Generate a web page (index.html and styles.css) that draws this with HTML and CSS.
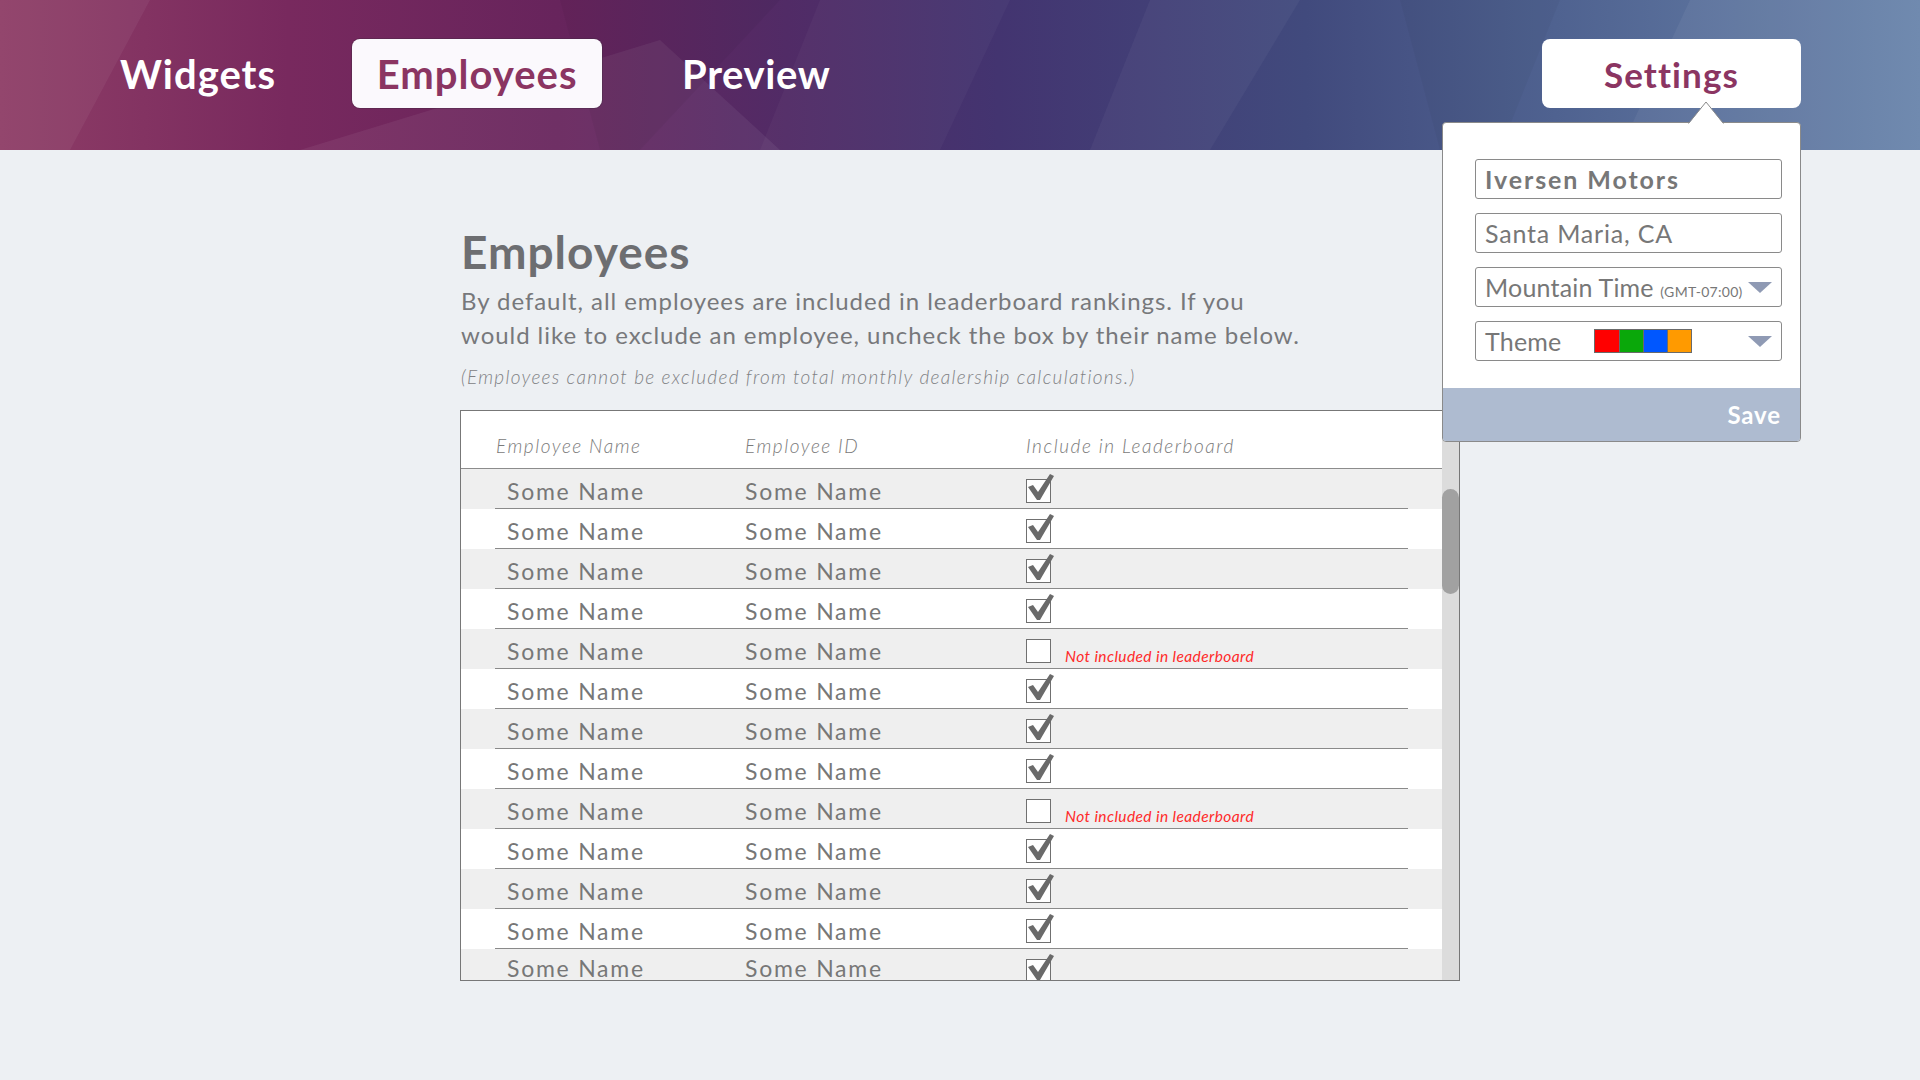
FILE: index.html
```html
<!DOCTYPE html>
<html lang="en">
<head>
<meta charset="utf-8">
<title>Employees</title>
<link rel="stylesheet" href="styles.css">
</head>
<body>
<header class="topbar">
  <svg class="facets" viewBox="0 0 1920 150" preserveAspectRatio="none" aria-hidden="true">
    <polygon points="0,0 150,0 70,150 0,150" fill="#ffffff" opacity="0.05"/>
    <polygon points="300,150 660,40 780,150" fill="#ffffff" opacity="0.06"/>
    <polygon points="560,0 780,0 640,150 600,150" fill="#000000" opacity="0.04"/>
    <polygon points="820,0 1010,0 940,150 760,150" fill="#ffffff" opacity="0.03"/>
    <polygon points="1150,0 1300,0 1210,150 1090,150" fill="#ffffff" opacity="0.04"/>
    <polygon points="1690,0 1920,0 1920,150 1620,150" fill="#ffffff" opacity="0.05"/>
    <polygon points="1400,0 1560,0 1500,150 1440,150" fill="#000000" opacity="0.03"/>
  </svg>
  <nav class="tabs">
    <a class="tab">Widgets</a>
    <a class="tab active">Employees</a>
    <a class="tab">Preview</a>
  </nav>
  <div class="settings-wrap">
    <button class="settings-btn">Settings</button>
    <div class="popover">
      <svg class="caret" width="36" height="23" viewBox="0 0 36 23" aria-hidden="true">
        <polygon points="0.5,23 18,1 35.5,23" fill="#ffffff"/>
        <polyline points="0.5,22.5 18,1 35.5,22.5" fill="none" stroke="#8a8a8a" stroke-width="1"/>
      </svg>
      <div class="pop-body">
        <div class="field strong">Iversen Motors</div>
        <div class="field wide">Santa Maria, CA</div>
        <div class="field">
          <span>Mountain Time <small class="tz">(GMT-07:00)</small></span>
          <i class="tri"></i>
        </div>
        <div class="field">
          <span>Theme</span>
          <span class="swatches">
            <b class="sw red"></b><b class="sw green"></b><b class="sw blue"></b><b class="sw orange"></b>
          </span>
          <i class="tri"></i>
        </div>
      </div>
      <div class="pop-foot">Save</div>
    </div>
  </div>
</header>

<main class="content">
  <h1 class="title">Employees</h1>
  <p class="lead">By default, all employees are included in leaderboard rankings. If you<br>would like to exclude an employee, uncheck the box by their name below.</p>
  <p class="note">(Employees cannot be excluded from total monthly dealership calculations.)</p>

  <div class="table">
    <div class="list">
      <div class="thead">
        <span>Employee Name</span>
        <span>Employee ID</span>
        <span>Include in Leaderboard</span>
      </div>
      <div class="row"><div class="row-inner"><span class="cell">Some Name</span><span class="cell">Some Name</span><span class="inc"><span class="cb"><svg class="tick" viewBox="0 0 30 30"><polygon points="2,13 7,11 12,18 24,0 28,2 14,26 11,26"/></svg></span></span></div></div>
      <div class="row"><div class="row-inner"><span class="cell">Some Name</span><span class="cell">Some Name</span><span class="inc"><span class="cb"><svg class="tick" viewBox="0 0 30 30"><polygon points="2,13 7,11 12,18 24,0 28,2 14,26 11,26"/></svg></span></span></div></div>
      <div class="row"><div class="row-inner"><span class="cell">Some Name</span><span class="cell">Some Name</span><span class="inc"><span class="cb"><svg class="tick" viewBox="0 0 30 30"><polygon points="2,13 7,11 12,18 24,0 28,2 14,26 11,26"/></svg></span></span></div></div>
      <div class="row"><div class="row-inner"><span class="cell">Some Name</span><span class="cell">Some Name</span><span class="inc"><span class="cb"><svg class="tick" viewBox="0 0 30 30"><polygon points="2,13 7,11 12,18 24,0 28,2 14,26 11,26"/></svg></span></span></div></div>
      <div class="row"><div class="row-inner"><span class="cell">Some Name</span><span class="cell">Some Name</span><span class="inc"><span class="cb"></span><span class="miss">Not included in leaderboard</span></span></div></div>
      <div class="row"><div class="row-inner"><span class="cell">Some Name</span><span class="cell">Some Name</span><span class="inc"><span class="cb"><svg class="tick" viewBox="0 0 30 30"><polygon points="2,13 7,11 12,18 24,0 28,2 14,26 11,26"/></svg></span></span></div></div>
      <div class="row"><div class="row-inner"><span class="cell">Some Name</span><span class="cell">Some Name</span><span class="inc"><span class="cb"><svg class="tick" viewBox="0 0 30 30"><polygon points="2,13 7,11 12,18 24,0 28,2 14,26 11,26"/></svg></span></span></div></div>
      <div class="row"><div class="row-inner"><span class="cell">Some Name</span><span class="cell">Some Name</span><span class="inc"><span class="cb"><svg class="tick" viewBox="0 0 30 30"><polygon points="2,13 7,11 12,18 24,0 28,2 14,26 11,26"/></svg></span></span></div></div>
      <div class="row"><div class="row-inner"><span class="cell">Some Name</span><span class="cell">Some Name</span><span class="inc"><span class="cb"></span><span class="miss">Not included in leaderboard</span></span></div></div>
      <div class="row"><div class="row-inner"><span class="cell">Some Name</span><span class="cell">Some Name</span><span class="inc"><span class="cb"><svg class="tick" viewBox="0 0 30 30"><polygon points="2,13 7,11 12,18 24,0 28,2 14,26 11,26"/></svg></span></span></div></div>
      <div class="row"><div class="row-inner"><span class="cell">Some Name</span><span class="cell">Some Name</span><span class="inc"><span class="cb"><svg class="tick" viewBox="0 0 30 30"><polygon points="2,13 7,11 12,18 24,0 28,2 14,26 11,26"/></svg></span></span></div></div>
      <div class="row"><div class="row-inner"><span class="cell">Some Name</span><span class="cell">Some Name</span><span class="inc"><span class="cb"><svg class="tick" viewBox="0 0 30 30"><polygon points="2,13 7,11 12,18 24,0 28,2 14,26 11,26"/></svg></span></span></div></div>
      <div class="row"><div class="row-inner"><span class="cell">Some Name</span><span class="cell">Some Name</span><span class="inc"><span class="cb"><svg class="tick" viewBox="0 0 30 30"><polygon points="2,13 7,11 12,18 24,0 28,2 14,26 11,26"/></svg></span></span></div></div>
    </div>
    <div class="scroll"><div class="thumb"></div></div>
  </div>
</main>
</body>
</html>
```

FILE: styles.css
```css
* { box-sizing: border-box; }

html, body {
  margin: 0;
  padding: 0;
}

body {
  width: 1920px;
  height: 1080px;
  overflow: hidden;
  background: #edf0f3;
  font-family: Lato, "Liberation Sans", sans-serif;
  color: #777777;
}

/* ---------- top bar ---------- */
.topbar {
  position: relative;
  height: 150px;
  display: flex;
  justify-content: space-between;
  align-items: flex-start;
  padding: 39px 119px 0 96px;
  background: linear-gradient(90deg,
    #8e3d66 0%,
    #78295e 15%,
    #67245c 29%,
    #512b66 41%,
    #433470 52%,
    #414a7d 68%,
    #4f6290 81%,
    #6984ab 100%);
  z-index: 2;
}

.facets {
  position: absolute;
  left: 0;
  top: 0;
  width: 100%;
  height: 100%;
  pointer-events: none;
}

.tabs {
  position: relative;
  display: flex;
  gap: 52px;
}

.tab {
  height: 69px;
  padding: 0 24px;
  display: flex;
  align-items: center;
  justify-content: center;
  border-radius: 8px;
  font-size: 40px;
  font-weight: 700;
  color: #ffffff;
  letter-spacing: 1px;
}

.tab.active {
  min-width: 250px;
  background: #fbf9fd;
  color: #8b3562;
  box-shadow: 0 0 0 1px rgba(60, 40, 60, 0.35);
}

.tab:last-child {
  margin-left: 4px;
  letter-spacing: 0.6px;
}

.settings-wrap {
  position: relative;
}

.settings-btn {
  width: 259px;
  height: 69px;
  border: none;
  border-radius: 8px;
  background: #ffffff;
  font-family: Lato, "Liberation Sans", sans-serif;
  font-size: 35px;
  font-weight: 700;
  color: #8b3562;
  letter-spacing: 1.1px;
  padding: 0;
}

/* ---------- settings popover ---------- */
.popover {
  position: absolute;
  top: 83px;
  right: 0;
  width: 359px;
  background: #ffffff;
  border: 1px solid #8a8a8a;
  border-radius: 4px;
}

.caret {
  position: absolute;
  left: 245px;
  top: -22px;
}

.pop-body {
  padding: 36px 18px 27px 32px;
  display: flex;
  flex-direction: column;
  gap: 14px;
}

.field {
  height: 40px;
  border: 1px solid #8a8a8a;
  border-radius: 3px;
  padding: 0 9px;
  display: flex;
  align-items: center;
  font-size: 25px;
  letter-spacing: 0.2px;
  color: #777777;
  white-space: nowrap;
}

.field.strong {
  font-size: 25px;
  font-weight: 700;
  letter-spacing: 1.9px;
}

.field.wide {
  letter-spacing: 0.8px;
}

.tz {
  font-size: 14px;
  letter-spacing: 0.3px;
}

.tri {
  margin-left: auto;
  width: 0;
  height: 0;
  border-left: 12.5px solid transparent;
  border-right: 12.5px solid transparent;
  border-top: 11px solid #8f9ab4;
}

.swatches {
  margin-left: auto;
  margin-right: 24px;
  display: flex;
  border: 1px solid #6a6a6a;
}

.sw {
  display: block;
  width: 24px;
  height: 22px;
}

.sw + .sw {
  border-left: 1px solid #6a6a6a;
}

.sw.red { background: #ff0000; }
.sw.green { background: #0aa80a; }
.sw.blue { background: #0057ff; }
.sw.orange { background: #ff9a00; }

.pop-foot {
  height: 53px;
  background: #aebbd0;
  border-radius: 0 0 3px 3px;
  display: flex;
  align-items: center;
  justify-content: flex-end;
  padding-right: 19px;
  font-size: 24px;
  font-weight: 700;
  letter-spacing: 0.9px;
  color: #ffffff;
}

/* ---------- main content ---------- */
.content {
  width: 1000px;
  margin: 0 auto;
  padding-top: 76px;
}

.title {
  margin: 0;
  font-size: 46px;
  font-weight: 700;
  line-height: 52px;
  letter-spacing: 1px;
  color: #6d6e71;
  padding-left: 1px;
}

.lead {
  margin: 6px 0 0;
  padding-left: 1px;
  font-size: 24px;
  line-height: 34px;
  letter-spacing: 0.95px;
  color: #77787b;
}

.note {
  margin: 13px 0 0;
  padding-left: 1px;
  font-size: 19px;
  line-height: 24px;
  font-style: italic;
  font-weight: 300;
  letter-spacing: 1.3px;
  color: #808184;
}

/* ---------- table ---------- */
.table {
  margin-top: 21px;
  height: 571px;
  border: 1px solid #777777;
  display: flex;
  overflow: hidden;
  background: #ffffff;
}

.list {
  flex: 1;
  min-width: 0;
}

.thead {
  height: 58px;
  border-bottom: 1px solid #8c8c8c;
  display: grid;
  grid-template-columns: 249px 281px 1fr;
  align-items: end;
  padding: 0 0 10px 35px;
  font-size: 19px;
  line-height: 24px;
  font-style: italic;
  font-weight: 300;
  letter-spacing: 1.55px;
  color: #7a7a7a;
  background: #ffffff;
}

.row {
  height: 40px;
  background: #ffffff;
}

.row:nth-child(even) {
  background: #efefef;
}

.row-inner {
  height: 40px;
  margin: 0 34px;
  border-bottom: 1px solid #8a8a8a;
  padding-left: 12px;
  display: grid;
  grid-template-columns: 238px 281px 1fr;
  align-items: start;
}

.cell {
  padding-top: 13px;
  font-size: 23px;
  line-height: 18px;
  color: #777777;
  letter-spacing: 1.75px;
  white-space: nowrap;
}

.row:last-child .cell {
  padding-top: 10px;
}

.inc {
  display: flex;
  align-items: flex-start;
  padding-top: 10px;
}

.cb {
  position: relative;
  width: 25px;
  height: 24px;
  border: 1.5px solid #707070;
  background: #ffffff;
  flex: none;
}

.tick {
  position: absolute;
  left: -1.5px;
  top: -6.5px;
  width: 30px;
  height: 30px;
  fill: #6a6a6a;
}

.miss {
  margin: 8px 0 0 14px;
  font-size: 15.5px;
  font-style: italic;
  letter-spacing: 0.4px;
  color: #ff2a2a;
  white-space: nowrap;
}

.scroll {
  width: 17px;
  flex: none;
  background: #dcdcdc;
  padding-top: 78px;
}

.thumb {
  height: 105px;
  border-radius: 9px;
  background: #a1a1a1;
}
```
